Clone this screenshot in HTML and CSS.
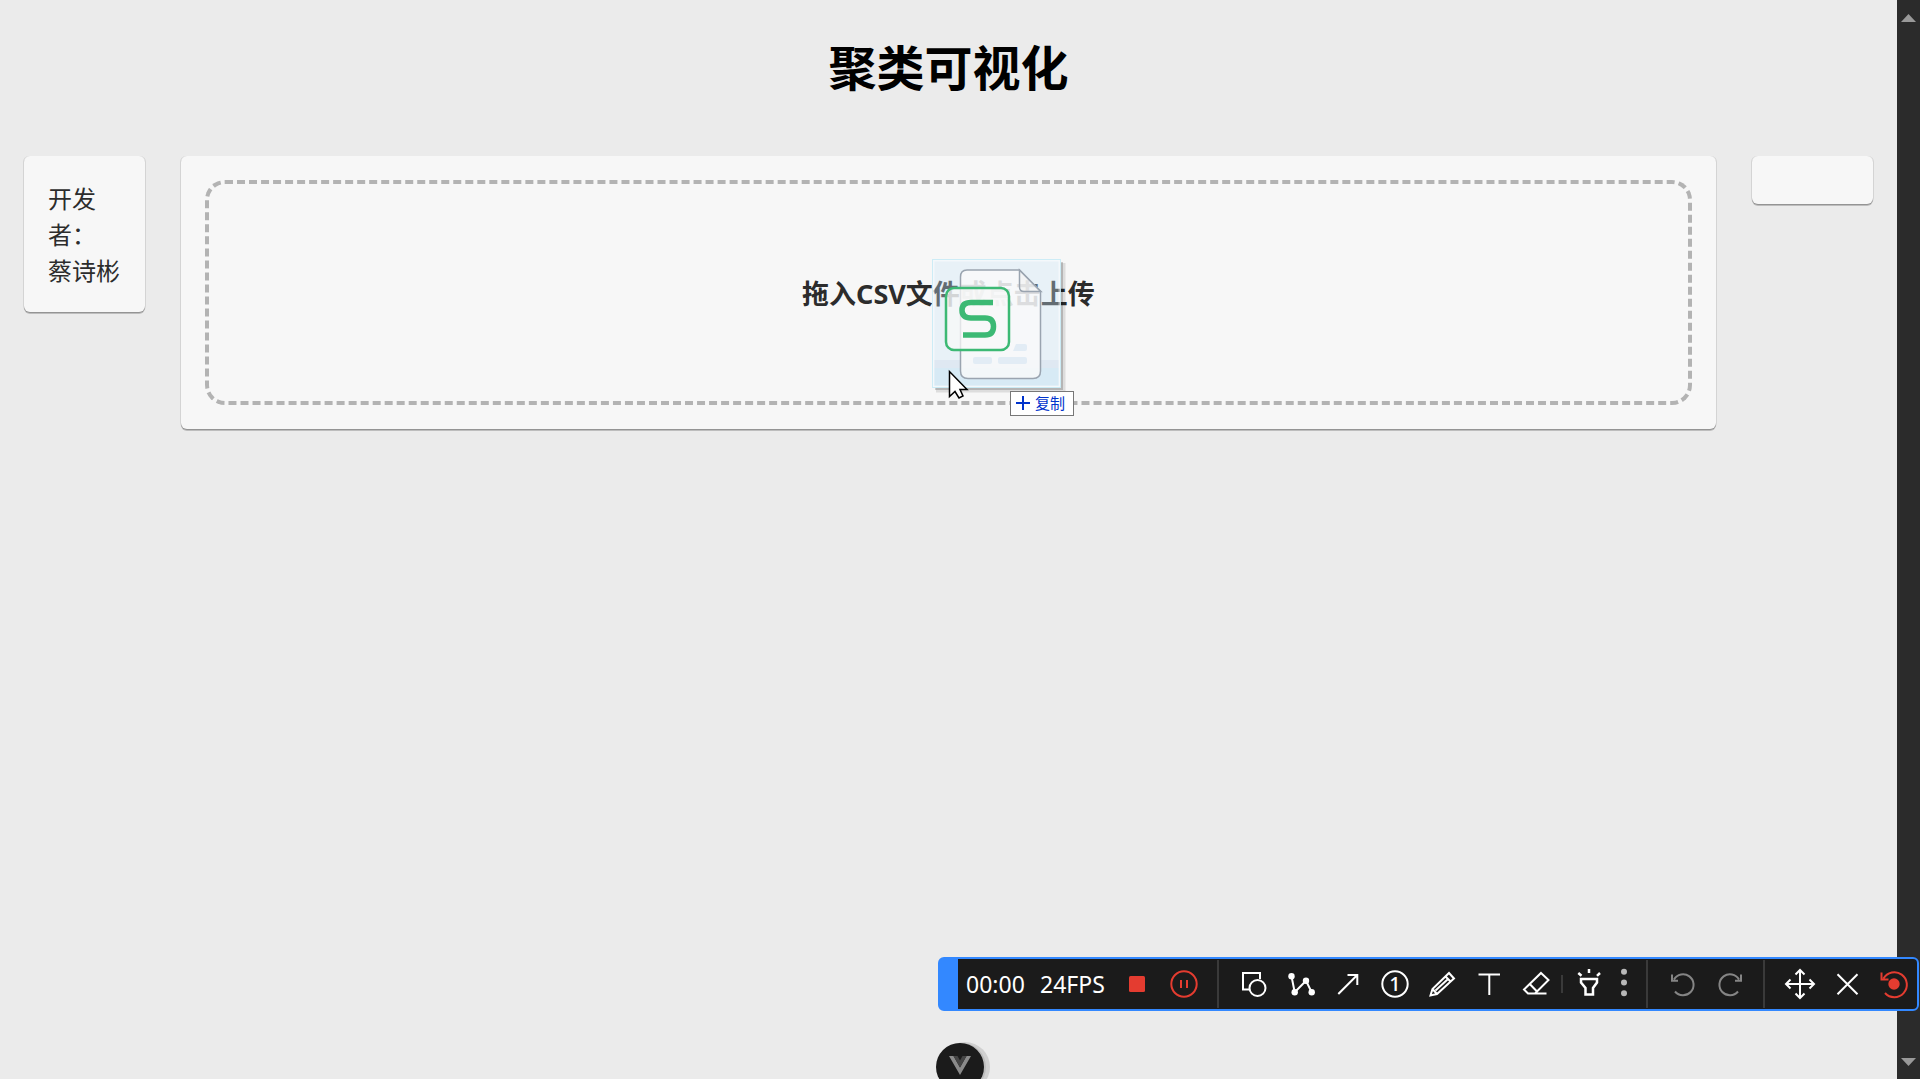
FILE: index.html
```
<!DOCTYPE html>
<html lang="zh-CN">
<head>
<meta charset="utf-8">
<title>聚类可视化</title>
<link rel="stylesheet" href="styles.css">
</head>
<body>
<div class="page">
  <header class="header"><h1 class="title">聚类可视化</h1></header>
  <main class="columns">
    <aside class="card">开发者：<br>蔡诗彬</aside>
    <section class="card">
      <button class="dropzone" type="button">拖入CSV文件或点击上传</button>
    </section>
    <aside class="card"></aside>
  </main>
</div>

<div class="scrollbar" aria-hidden="true">
  <svg width="15" height="8" viewBox="0 0 15 8"><path d="M7.500 0L15 8H0z" fill="#999"/></svg>
  <svg width="15" height="8" viewBox="0 0 15 8"><path d="M0 0H15L7.500 8z" fill="#999"/></svg>
</div>

<button class="devtools" type="button" aria-label="Vue DevTools">
  <svg width="22" height="19" viewBox="0 0 22 19"><path d="M0 0H4.500L11 11.500L17.500 0H22L11 19z" fill="#8a8a8a"/><path d="M4.500 0H8.500L11 4.500L13.500 0H17.500L11 11.500z" fill="#454545"/></svg>
</button>

<div class="drag">
  <svg class="drag-file" width="140" height="140" viewBox="0 0 140 140">
    <path d="M4 131H131V4" fill="none" stroke="#000" stroke-opacity=".1" stroke-width="5"/>
    <path d="M3 130H130V3" fill="none" stroke="#000" stroke-opacity=".18" stroke-width="2"/>
    <rect x="0" y="0" width="129" height="129" rx="1" fill="#cce6f7" fill-opacity=".35"/>
    <rect x="2" y="101" width="125" height="8" fill="#d5e0ee" fill-opacity=".5"/>
    <rect x="2" y="109" width="125" height="18" fill="#c4e2f2" fill-opacity=".45"/>
    <rect x="1.500" y="1.500" width="126" height="126" fill="none" stroke="#fff" stroke-opacity=".5" stroke-width="2"/>
    <rect x=".5" y=".5" width="128" height="128" fill="none" stroke="#c4eaf5" stroke-opacity=".8"/>
    <path d="M35 11H87.500L108.500 32.500V112Q108.500 119.500 101 119.500H36Q28.500 119.500 28.500 112V18Q28.500 11 35 11Z" fill="#fafafa" fill-opacity=".8" stroke="#9aa4b0" stroke-width="1.500"/>
    <path d="M87.500 11V28Q87.500 32.500 92 32.500H109Z" fill="#ececec" fill-opacity=".3" stroke="#9aa4b0" stroke-width="1.500"/>
    <g fill="#e2ecf5"><rect x="41" y="98" width="19" height="7" rx="2"/><rect x="66" y="98" width="29" height="7" rx="2"/><path d="M84 85H93Q95 85 95 87V90Q95 92 93 92H81Z"/></g>
    <rect x="14" y="29" width="63" height="62" rx="8" fill="#f8f8f8" fill-opacity=".75" stroke="#3cb974" stroke-width="2.500"/>
    <path d="M61 43.500H39Q30 43.500 30 51.200T39 59H53Q61.500 59 61.500 67.500T53 76H31" fill="none" stroke="#3cb974" stroke-width="5.500"/>
    <path d="M17.500 112.500V137.500L23 132.500L27 139L31 137L28 130.500H35Z" fill="#fff" stroke="#000" stroke-width="1.500"/>
  </svg>
  <div class="drag-tip"><svg width="14" height="14" viewBox="0 0 14 14"><path d="M7 0V14M0 7H14" stroke="#0033cc" stroke-width="2"/></svg>复制</div>
</div>

<div class="recorder" role="toolbar" aria-label="录屏">
  <span class="time">00:00</span><span class="fps">24FPS</span>
  <div class="group red">
    <button class="tool" type="button" aria-label="停止"><svg class="icon" viewBox="0 0 32 32"><rect x="8" y="8" width="16" height="16" rx="1.500" fill="currentColor" stroke="none"/></svg></button>
    <button class="tool" type="button" aria-label="暂停"><svg class="icon" viewBox="0 0 32 32"><circle cx="16" cy="16" r="12.700"/><path d="M13 12V20M19 12V20"/></svg></button>
  </div>
  <div class="group">
    <button class="tool" type="button" aria-label="形状"><svg class="icon" viewBox="0 0 32 32"><path d="M22 11V5H5V21.500H11"/><circle cx="19.500" cy="20" r="8"/></svg></button>
    <button class="tool" type="button" aria-label="折线"><svg class="icon" viewBox="0 0 32 32"><path d="M6.500 8.300L9.700 24.300L21 12.700L26.700 24.300"/><g fill="currentColor" stroke="none"><circle cx="6.500" cy="8.300" r="3.200"/><circle cx="9.700" cy="24.300" r="3.200"/><circle cx="21" cy="12.700" r="3.200"/><circle cx="26.700" cy="24.300" r="3.200"/></g></svg></button>
    <button class="tool" type="button" aria-label="箭头"><svg class="icon" viewBox="0 0 32 32"><path d="M6.300 26L25.300 7M15.500 7H25.300V17"/></svg></button>
    <button class="tool" type="button" aria-label="序号"><svg class="icon" viewBox="0 0 32 32"><circle cx="16" cy="16" r="12.700"/><text class="digit" x="16" y="23">1</text></svg></button>
    <button class="tool" type="button" aria-label="画笔"><svg class="icon" viewBox="0 0 32 32"><path d="M23 5L28 10.500L11 26L4.500 27.500L6.500 21ZM19.500 8.500L24.500 13.500M6.500 21L11 26M21.500 11.500L9.500 22.500"/></svg></button>
    <button class="tool" type="button" aria-label="文字"><svg class="icon" viewBox="0 0 32 32"><path d="M5.500 6.500H27M16.300 6.500V27"/></svg></button>
    <button class="tool" type="button" aria-label="橡皮"><svg class="icon" viewBox="0 0 32 32"><path d="M21 5L28.500 12L15 25.500H8L4 21.500ZM9.500 15.700L17 23.500M8 25.500H26.500"/></svg></button>
    <span class="rule"></span>
    <button class="tool" type="button" aria-label="聚光灯"><svg class="icon" viewBox="0 0 32 32"><path d="M8 11H24V14.500L20 20V26.500H12.500V20L8 14.500Z" stroke-width="2.500"/><path d="M16 1V5M5.300 5L8.500 7.800M27 5L24 7.800" stroke-width="2.500"/></svg></button>
    <button class="tool tool-more" type="button" aria-label="更多"><svg class="icon" viewBox="0 0 32 32"><g fill="#b8b8b8" stroke="none"><circle cx="16" cy="3.700" r="3"/><circle cx="16" cy="14.500" r="3"/><circle cx="16" cy="25.300" r="3"/></g></svg></button>
  </div>
  <div class="group dim">
    <button class="tool" type="button" aria-label="撤销"><svg class="icon" viewBox="0 0 32 32"><path d="M8 23.500A10.500 10.500 0 1 0 7 11.500M5 6.500V12.700H11"/></svg></button>
    <button class="tool" type="button" aria-label="重做"><svg class="icon" viewBox="0 0 32 32"><path d="M24 23.500A10.500 10.500 0 1 1 25 11.500M27 6.500V12.700H21"/></svg></button>
  </div>
  <div class="group">
    <button class="tool" type="button" aria-label="移动"><svg class="icon" viewBox="0 0 32 32"><path d="M16 2V30M2 16H30M11.500 6.500L16 2L20.500 6.500M11.500 25.500L16 30L20.500 25.500M6.500 11.500L2 16L6.500 20.500M25.500 11.500L30 16L25.500 20.500"/></svg></button>
    <button class="tool" type="button" aria-label="关闭"><svg class="icon" viewBox="0 0 32 32"><path d="M6.500 6.300L26.500 26.300M26.500 6.300L6.500 26.300"/></svg></button>
    <button class="tool red" type="button" aria-label="重新录制"><svg class="icon" viewBox="0 0 32 32"><path d="M7 25A12.500 12.500 0 1 0 5.500 10.500M3.500 4.500V11.500H10.500"/><circle cx="16" cy="16" r="5.700" fill="currentColor" stroke="none"/></svg></button>
  </div>
</div>
</body>
</html>
```
FILE: styles.css
```
* { box-sizing: border-box; }
body {
  margin: 0;
  min-height: 100vh;
  display: flex;
  overflow: hidden;
  background: #ebebeb;
  color: #2c2c2c;
  font: 24px/36px "Noto Sans", "Noto Sans CJK SC", sans-serif;
}
button { margin: 0; padding: 0; border: 0; background: none; color: inherit; font: inherit; cursor: pointer; }
svg { display: block; flex: none; }

.page { flex: 1; min-width: 0; }
.header { padding: 32px 24px 52px; }
.title { margin: 0; color: #000; font-size: 48px; line-height: 72px; font-weight: 700; text-align: center; }
.columns { display: grid; grid-template-columns: 121px minmax(0, 1fr) 121px; gap: 36px; align-items: start; padding: 0 24px; }
.card {
  padding: 24px;
  border-radius: 6px;
  background: #f7f7f7;
  font-family: "Noto Sans CJK SC", sans-serif;
  box-shadow: 0 1px 0 #949494, 0 2px 0 #bdbdbd, 1px 0 0 #d4d4d4, -1px 0 0 #d4d4d4;
}
.dropzone {
  display: block;
  width: 100%;
  padding: 92px 24px 89px;
  border: 4px dashed #b3b3b3;
  border-radius: 20px;
  font: 700 27px/36px "Noto Sans", "Noto Sans CJK SC", sans-serif;
}

.scrollbar {
  width: 23px;
  height: 100vh;
  display: flex;
  flex-direction: column;
  justify-content: space-between;
  align-items: center;
  padding: 14px 0 13px;
  background: #2b2b2b;
}

.devtools {
  position: fixed;
  left: 50%;
  bottom: -12px;
  width: 48px;
  height: 48px;
  margin-left: -24px;
  padding: 12px 12px 16px;
  border-radius: 24px;
  background: #1b1b1b;
  box-shadow: 2px 0 0 #bdbdbd, 5px 0 0 1px #d0d0d0;
}
.devtools svg { margin: 0 auto; }

.drag { position: absolute; left: 932px; top: 259px; }
.drag-tip {
  position: absolute;
  left: 78px;
  top: 132px;
  display: flex;
  align-items: center;
  gap: 5px;
  width: 64px;
  height: 25px;
  padding: 0 0 2px 5px;
  border: 1px solid #777;
  background: #fff;
  color: #0033cc;
  font: 15px/22px "Noto Sans CJK SC", sans-serif;
  white-space: nowrap;
}

.recorder {
  position: fixed;
  right: 1px;
  bottom: 68px;
  display: flex;
  align-items: center;
  height: 54px;
  border: 2px solid #3388ff;
  border-left-width: 20px;
  border-radius: 6px;
  background: #1b1b1b;
  color: #fff;
  font-size: 23px;
  white-space: nowrap;
}
.time { width: 74px; margin-left: 8px; }
.fps { width: 73px; }
.group { display: flex; align-items: center; }
.group + .group { margin-left: 10px; padding-left: 11px; border-left: 2px solid #3a3a3a; height: 48px; }
.red { color: #e43c30; }
.dim { color: #858585; }
.tool { width: 47px; height: 48px; display: flex; align-items: center; justify-content: center; }
.tool-more { width: 24px; }
.rule { width: 2px; height: 18px; margin: 0 2px; background: #3a3a3a; }
.icon { width: 32px; height: 32px; fill: none; stroke: currentColor; stroke-width: 2; }
.digit { fill: currentColor; stroke: none; font: 500 20px "Noto Sans", sans-serif; text-anchor: middle; }
```
